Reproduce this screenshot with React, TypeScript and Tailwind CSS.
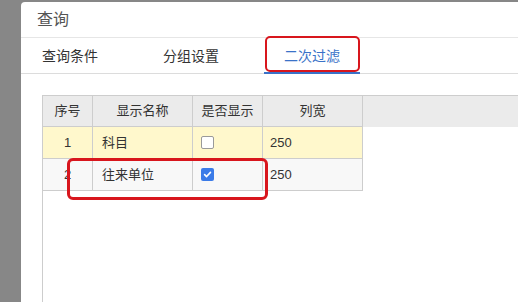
import React from "react";

const font = { fontFamily: '"Liberation Sans", "Noto Sans CJK SC", sans-serif' };

function Check({ checked }: { checked: boolean }) {
  if (!checked) {
    return <div className="w-[13px] h-[13px] rounded-[2px] border border-[#9a9a9a] bg-white" />;
  }
  return (
    <div className="w-[13px] h-[13px] rounded-[2px] bg-[#3b7be8] flex items-center justify-center">
      <svg width="9" height="9" viewBox="0 0 10 10">
        <path d="M1.8 5.2 L4 7.3 L8.3 2.6" fill="none" stroke="white" strokeWidth="1.8" strokeLinecap="round" strokeLinejoin="round" />
      </svg>
    </div>
  );
}

export default function App() {
  const rows = [
    { n: "1", name: "科目", show: false, w: "250", bg: "bg-[#fff8cc]" },
    { n: "2", name: "往来单位", show: true, w: "250", bg: "bg-[#f8f8f8]" },
  ];
  return (
    <div className="w-[518px] h-[302px] bg-[#878787] pt-[2px] pl-[21px] overflow-hidden text-[#333]" style={font}>
      <div className="bg-white rounded-tl-[4px] h-full flex flex-col">
        <div className="h-[36px] shrink-0 border-b border-[#e6e6e6] pl-[16px] flex items-center text-[16px] text-[#555]">
          查询
        </div>
        <div className="h-[36px] shrink-0 border-b border-[#dcdcdc] flex pl-[1px] gap-[25px] text-[14px]">
          <div className="px-[20px] pt-[2px] flex items-center text-[#333]">查询条件</div>
          <div className="px-[20px] pt-[2px] flex items-center text-[#333]">分组设置</div>
          <div className="relative px-[20px] pt-[2px] flex items-center text-[#3a72c8]">
            二次过滤
            <div className="absolute left-0 right-0 -bottom-[1px] h-[2px] bg-[#3a72c8]" />
            <div className="absolute left-[1px] right-0 -top-[2px] bottom-[1px] border-[2.5px] border-[#d8161d] rounded-[5px]" />
          </div>
        </div>
        <div className="flex-1 pl-[21px] pt-[21px] flex flex-col">
          <div className="relative flex-1 border-l border-t border-[#cdcdcd] flex flex-col text-[13px]">
            <div className="flex h-[31px] bg-[#ebebeb] shrink-0">
              <div className="w-[50px] border-r border-b border-[#cdcdcd] flex items-center justify-center">序号</div>
              <div className="w-[100px] border-r border-b border-[#cdcdcd] flex items-center justify-center">显示名称</div>
              <div className="w-[70px] border-r border-b border-[#cdcdcd] flex items-center justify-center">是否显示</div>
              <div className="w-[100px] border-r border-b border-[#cdcdcd] flex items-center justify-center">列宽</div>
              <div className="flex-1" />
            </div>
            {rows.map((r) => (
              <div key={r.n} className={`flex h-[32px] w-[320px] ${r.bg}`}>
                <div className="w-[50px] border-r border-b border-[#cdcdcd] flex items-center justify-center">{r.n}</div>
                <div className="w-[100px] border-r border-b border-[#cdcdcd] flex items-center pl-[9px]">{r.name}</div>
                <div className="w-[70px] border-r border-b border-[#cdcdcd] flex items-center pl-[8px]">
                  <Check checked={r.show} />
                </div>
                <div className="w-[100px] border-r border-b border-[#cdcdcd] flex items-center pl-[7px]">{r.w}</div>
              </div>
            ))}
            <div className="absolute left-[24px] top-[62px] w-[201px] h-[42px] border-[3px] border-[#d8161d] rounded-[6px]" />
          </div>
        </div>
      </div>
    </div>
  );
}
